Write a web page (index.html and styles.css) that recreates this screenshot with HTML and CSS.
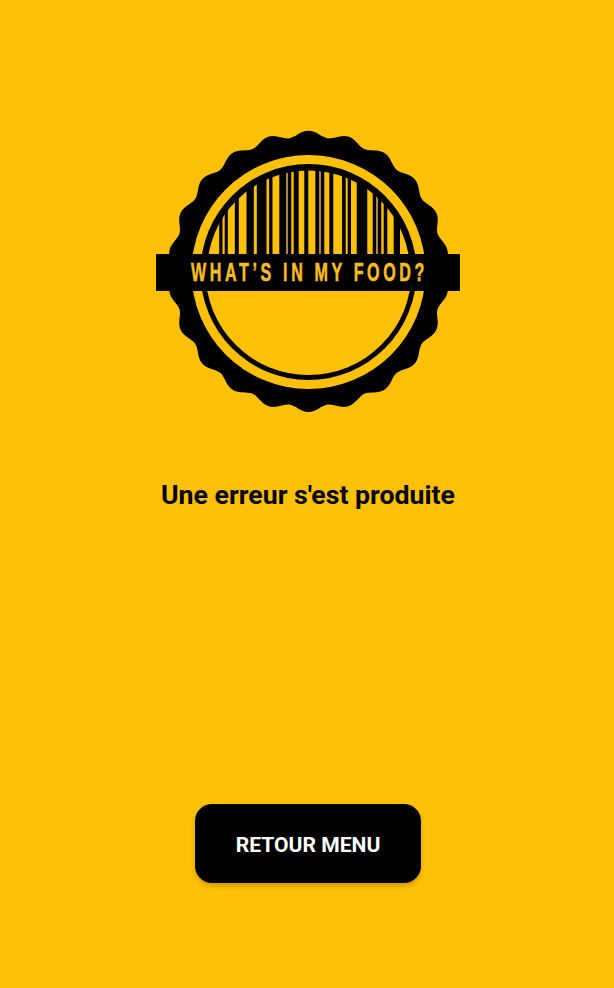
FILE: index.html
```html
<!DOCTYPE html>
<html lang="fr">
<head>
<meta charset="utf-8">
<title>What's in my food?</title>
<link rel="stylesheet" href="styles.css">
</head>
<body>
<main class="screen">
  <svg class="logo" viewBox="-152.5 -142 304 283" width="304" height="283" role="img" aria-label="What's in my food?">
    <defs>
      <path id="scallop" d="M0 0L-19.1 -133.1C-12.5 -134.2 -8 -140.6 0 -140.6C8 -140.6 12.5 -134.2 19.1 -133.1Z"/>
      <clipPath id="upper"><circle r="101.5"/></clipPath>
      <clipPath id="lower"><rect x="-110" y="19" width="220" height="100"/></clipPath>
    </defs>
    <g class="ink" transform="translate(0 -0.6)">
      <circle r="134"/>
      <use href="#scallop"/>
      <use href="#scallop" transform="rotate(16.364)"/>
      <use href="#scallop" transform="rotate(32.727)"/>
      <use href="#scallop" transform="rotate(49.091)"/>
      <use href="#scallop" transform="rotate(65.455)"/>
      <use href="#scallop" transform="rotate(81.818)"/>
      <use href="#scallop" transform="rotate(98.182)"/>
      <use href="#scallop" transform="rotate(114.545)"/>
      <use href="#scallop" transform="rotate(130.909)"/>
      <use href="#scallop" transform="rotate(147.273)"/>
      <use href="#scallop" transform="rotate(163.636)"/>
      <use href="#scallop" transform="rotate(180)"/>
      <use href="#scallop" transform="rotate(196.364)"/>
      <use href="#scallop" transform="rotate(212.727)"/>
      <use href="#scallop" transform="rotate(229.091)"/>
      <use href="#scallop" transform="rotate(245.455)"/>
      <use href="#scallop" transform="rotate(261.818)"/>
      <use href="#scallop" transform="rotate(278.182)"/>
      <use href="#scallop" transform="rotate(294.545)"/>
      <use href="#scallop" transform="rotate(310.909)"/>
      <use href="#scallop" transform="rotate(327.273)"/>
      <use href="#scallop" transform="rotate(343.636)"/>
    </g>
    <circle class="gold" r="117"/>
    <circle class="ink" r="108"/>
    <circle class="gold" r="103" clip-path="url(#lower)"/>
    <g class="gold" clip-path="url(#upper)">
      <rect x="-99.5" y="-110" width="10.2" height="110"/>
      <rect x="-86" y="-110" width="2.2" height="110"/>
      <rect x="-80.7" y="-110" width="7" height="110"/>
      <rect x="-69.7" y="-110" width="7.7" height="110"/>
      <rect x="-54.7" y="-110" width="3" height="110"/>
      <rect x="-42" y="-110" width="2.6" height="110"/>
      <rect x="-36" y="-110" width="6.8" height="110"/>
      <rect class="dim" x="-22.5" y="-110" width="2" height="110"/>
      <rect x="-17.2" y="-110" width="2.4" height="110"/>
      <rect x="-9.8" y="-110" width="5.6" height="110"/>
      <rect x="-0.2" y="-110" width="7" height="110"/>
      <rect class="dim" x="10.5" y="-110" width="2" height="110"/>
      <rect x="15.8" y="-110" width="5" height="110"/>
      <rect x="24.8" y="-110" width="8.7" height="110"/>
      <rect x="37.2" y="-110" width="2" height="110"/>
      <rect x="42.5" y="-110" width="5.7" height="110"/>
      <rect x="58.8" y="-110" width="5.4" height="110"/>
      <rect class="dim" x="67.5" y="-110" width="2" height="110"/>
      <rect x="72.8" y="-110" width="2.4" height="110"/>
      <rect x="78.8" y="-110" width="6.4" height="110"/>
      <rect x="91.5" y="-110" width="9" height="110"/>
    </g>
    <rect class="ink" x="-152.5" y="-18" width="304" height="37"/>
    <text class="logo-text" transform="translate(-117.5 9) scale(0.606 1)">WHAT’S IN MY FOOD?</text>
  </svg>
  <h1 class="message">Une erreur s'est produite</h1>
  <button class="back" type="button">RETOUR MENU</button>
</main>
</body>
</html>
```
FILE: styles.css
```css
* {
  box-sizing: border-box;
}
html, body {
  margin: 0;
  height: 100%;
}
body {
  background: #ffc107;
  font-family: Roboto, "Liberation Sans", sans-serif;
}
.screen {
  height: 988px;
  display: flex;
  flex-direction: column;
  align-items: center;
  padding: 130px 0 0 2px;
}
.logo {
  display: block;
}
.ink {
  fill: #000;
}
.gold {
  fill: #ffc107;
}
.dim {
  fill: #a98a3a;
}
.logo-text {
  fill: #f7bd24;
  stroke: #f7bd24;
  stroke-width: 0.6px;
  font-family: "Liberation Sans", sans-serif;
  font-weight: 700;
  font-size: 26.5px;
  letter-spacing: 6px;
}
.message {
  margin: 67px 0 0;
  font-size: 26.7px;
  line-height: 31px;
  font-weight: 700;
  color: #000;
}
.back {
  margin-top: 293px;
  width: 226px;
  height: 79px;
  padding: 2px 0 0;
  border: 0;
  border-radius: 17px;
  background: #000;
  color: #fff;
  font-family: inherit;
  font-size: 21.1px;
  font-weight: 700;
  box-shadow: 0 3px 5px rgba(0, 0, 0, 0.2);
}
```
